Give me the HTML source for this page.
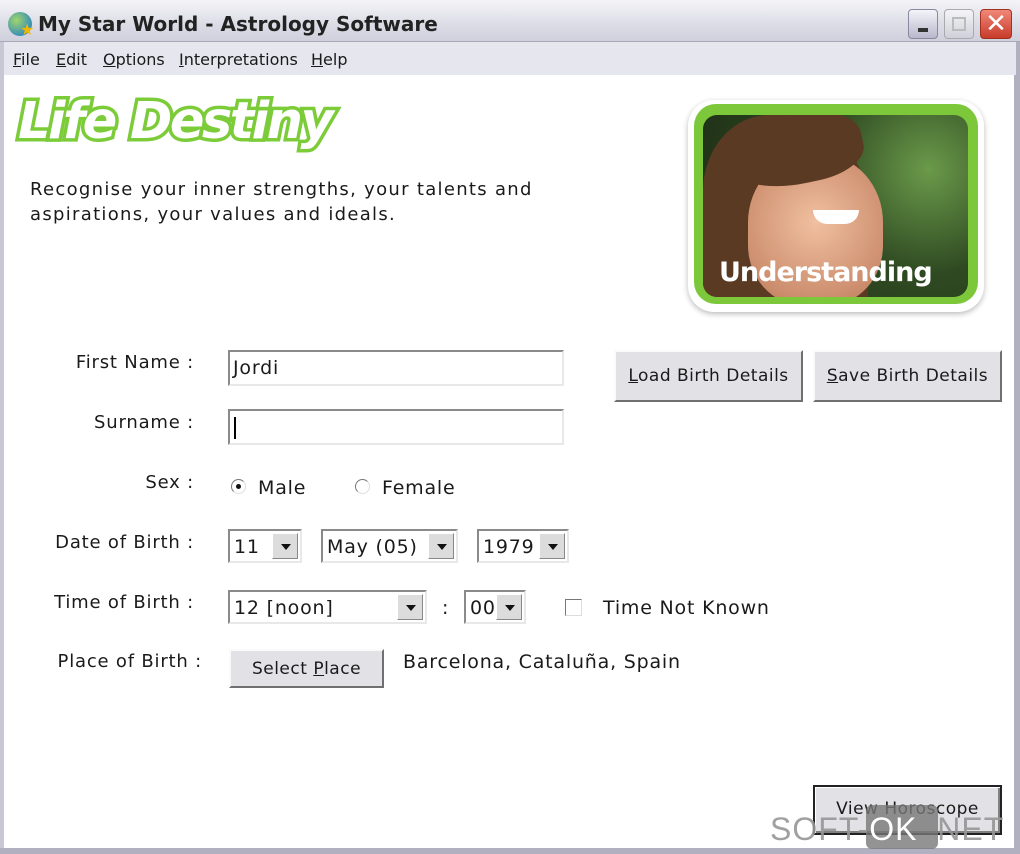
<!DOCTYPE html>
<html><head><style>
*{margin:0;padding:0;box-sizing:border-box}
body{width:1020px;height:854px;overflow:hidden;background:#fff;font-family:"DejaVu Sans","Liberation Sans",sans-serif;position:relative;color:#1a1a1a;letter-spacing:0.8px}
.a{position:absolute}
.title{left:0;top:0;width:1020px;height:42px;background:linear-gradient(#f4f4f8,#dcdce6 60%,#cfd0dc);border-bottom:1px solid #a8a8b8}
.menu{left:4px;top:42px;width:1012px;height:33px;background:#e6e6ee;letter-spacing:0}
.menu span{position:absolute;top:8px;font-size:16px}
.lbl{font-size:18px;text-align:right;width:172px}
.inp{border:2px solid;border-color:#8a8a8a #e8e8e8 #e8e8e8 #8a8a8a;background:#fff;font-size:19px;padding-left:3px}
.btn{background:#e2e2e6;border:2px solid;border-color:#fafafa #707070 #707070 #fafafa;font-size:17px;text-align:center;letter-spacing:0.5px}
.sel{border:2px solid;border-color:#8a8a8a #e8e8e8 #e8e8e8 #8a8a8a;background:#fff;font-size:19px;height:34px;padding:5px 0 0 4px}
.sel i{position:absolute;right:2px;top:2px;width:26px;height:26px;background:#dcdcdc;border:1px solid;border-color:#fff #888 #888 #fff}
.sel i:after{content:"";position:absolute;left:8px;top:10px;border:5px solid transparent;border-top:6px solid #111}
u{text-decoration:underline}
</style></head><body>
<div class="a title"></div>
<div class="a" style="left:8px;top:12px;width:24px;height:24px;border-radius:50%;background:radial-gradient(circle at 35% 35%,#9fd56a,#3a8fb8 70%)"></div>
<div class="a" style="left:20px;top:20px;color:#f2b800;font-size:16px">★</div>
<div class="a" style="left:38px;top:12px;font-size:20px;font-weight:bold;color:#222;letter-spacing:0">My Star World - Astrology Software</div>
<div class="a" style="left:908px;top:9px;width:30px;height:30px;border-radius:4px;background:linear-gradient(#f4f4fa,#b8b8cc);border:1px solid #8888a0"><div class="a" style="left:9px;top:18px;width:10px;height:4px;background:#333"></div></div>
<div class="a" style="left:944px;top:9px;width:30px;height:30px;border-radius:4px;background:linear-gradient(#f4f4f8,#d0d0da);border:1px solid #aaa"><div class="a" style="left:7px;top:7px;width:14px;height:14px;border:2px solid #bbb"></div></div>
<div class="a" style="left:980px;top:9px;width:32px;height:30px;border-radius:4px;background:linear-gradient(#f08878,#c83a2a);border:1px solid #a03020;color:#fff;font-size:26px;text-align:center;line-height:28px;letter-spacing:0">✕</div>
<div class="a" style="left:0;top:42px;width:4px;height:812px;background:#c8c8d4"></div>
<div class="a" style="left:1014px;top:42px;width:6px;height:812px;background:#b0b0c0"></div>
<div class="a" style="left:0;top:848px;width:1020px;height:6px;background:#b0b0c0"></div>
<div class="a menu">
<span style="left:9px"><u>F</u>ile</span><span style="left:52px"><u>E</u>dit</span><span style="left:99px"><u>O</u>ptions</span><span style="left:175px"><u>I</u>nterpretations</span><span style="left:307px"><u>H</u>elp</span>
</div>
<div class="a" style="left:18px;top:92px;font-family:'DejaVu Sans';font-weight:bold;font-size:51px;letter-spacing:-2.5px;color:#fff;-webkit-text-stroke:7px #7ccc3a;paint-order:stroke fill;font-style:italic">Life Destiny</div>
<div class="a" style="left:30px;top:177px;font-size:18px;line-height:25px;letter-spacing:1.3px">Recognise your inner strengths, your talents and<br>aspirations, your values and ideals.</div>
<div class="a" style="left:688px;top:100px;width:296px;height:212px;border-radius:26px;background:#fff;box-shadow:0 2px 6px #bbb"></div>
<div class="a" style="left:694px;top:104px;width:284px;height:200px;border-radius:22px;background:#7cc83a"></div>
<div class="a" style="left:703px;top:115px;width:265px;height:182px;border-radius:14px;overflow:hidden;background:radial-gradient(circle at 85% 30%,#6a9a4a,#2f4a22 40%,#1e2e16)">
<div class="a" style="left:0;top:0;width:165px;height:190px;border-radius:40% 50% 0 0;background:#5a3a22"></div>
<div class="a" style="left:45px;top:40px;width:135px;height:150px;border-radius:45% 45% 40% 40%;background:radial-gradient(circle at 50% 45%,#f0c0a0,#c88868 80%)"></div>
<div class="a" style="left:20px;top:0;width:140px;height:70px;border-radius:50% 50% 40% 60%;background:#5a3a22;transform:rotate(-12deg)"></div>
<div class="a" style="left:110px;top:95px;width:46px;height:14px;border-radius:0 0 24px 24px;background:#fff"></div>
<div class="a" style="left:16px;top:142px;font-family:'DejaVu Sans';font-weight:bold;font-size:27px;color:#fff;letter-spacing:-1px">Understanding</div>
</div>
<div class="a lbl" style="left:22px;top:352px">First Name :</div>
<div class="a lbl" style="left:22px;top:412px">Surname :</div>
<div class="a lbl" style="left:22px;top:472px">Sex :</div>
<div class="a lbl" style="left:22px;top:532px">Date of Birth :</div>
<div class="a lbl" style="left:22px;top:592px">Time of Birth :</div>
<div class="a lbl" style="left:30px;top:651px">Place of Birth :</div>
<div class="a inp" style="left:228px;top:350px;width:336px;height:36px;padding-top:5px">Jordi</div>
<div class="a inp" style="left:228px;top:409px;width:336px;height:36px"><div class="a" style="left:4px;top:6px;width:2px;height:22px;background:#000"></div></div>
<div class="a btn" style="left:614px;top:350px;width:189px;height:52px;line-height:48px"><u>L</u>oad Birth Details</div>
<div class="a btn" style="left:813px;top:350px;width:189px;height:52px;line-height:48px"><u>S</u>ave Birth Details</div>
<div class="a" style="left:231px;top:479px;width:15px;height:15px;border-radius:50%;border:1px solid;border-color:#777 #ddd #ddd #777;background:#fff"><div class="a" style="left:4px;top:4px;width:5px;height:5px;border-radius:50%;background:#111"></div></div>
<div class="a" style="left:258px;top:477px;font-size:19px">Male</div>
<div class="a" style="left:355px;top:479px;width:15px;height:15px;border-radius:50%;border:1px solid;border-color:#777 #ddd #ddd #777"></div>
<div class="a" style="left:382px;top:477px;font-size:19px">Female</div>
<div class="a sel" style="left:228px;top:529px;width:74px">11<i></i></div>
<div class="a sel" style="left:321px;top:529px;width:137px">May (05)<i></i></div>
<div class="a sel" style="left:477px;top:529px;width:92px">1979<i></i></div>
<div class="a sel" style="left:228px;top:590px;width:199px">12 [noon]<i></i></div>
<div class="a" style="left:442px;top:597px;font-size:19px">:</div>
<div class="a sel" style="left:464px;top:590px;width:62px">00<i></i></div>
<div class="a" style="left:565px;top:599px;width:17px;height:17px;border:1px solid;border-color:#777 #ddd #ddd #777"></div>
<div class="a" style="left:603px;top:597px;font-size:19px">Time Not Known</div>
<div class="a btn" style="left:229px;top:649px;width:155px;height:39px;line-height:36px">Select <u>P</u>lace</div>
<div class="a" style="left:403px;top:651px;font-size:19px">Barcelona, Cataluña, Spain</div>
<div class="a btn" style="left:813px;top:785px;width:189px;height:50px;line-height:44px;border:2px solid #222;box-shadow:inset 1px 1px #fff,inset -2px -2px #808080">View Horoscope</div>
<div class="a" style="left:866px;top:805px;width:72px;height:44px;border-radius:6px;background:rgba(120,120,120,0.8)"></div>
<div class="a" style="left:770px;top:811px;font-family:'Liberation Sans';font-size:32px;color:rgba(150,150,150,0.9);letter-spacing:1px">SOFT-<span style="color:#fff">OK</span>&nbsp;.NET</div>
</body></html>
